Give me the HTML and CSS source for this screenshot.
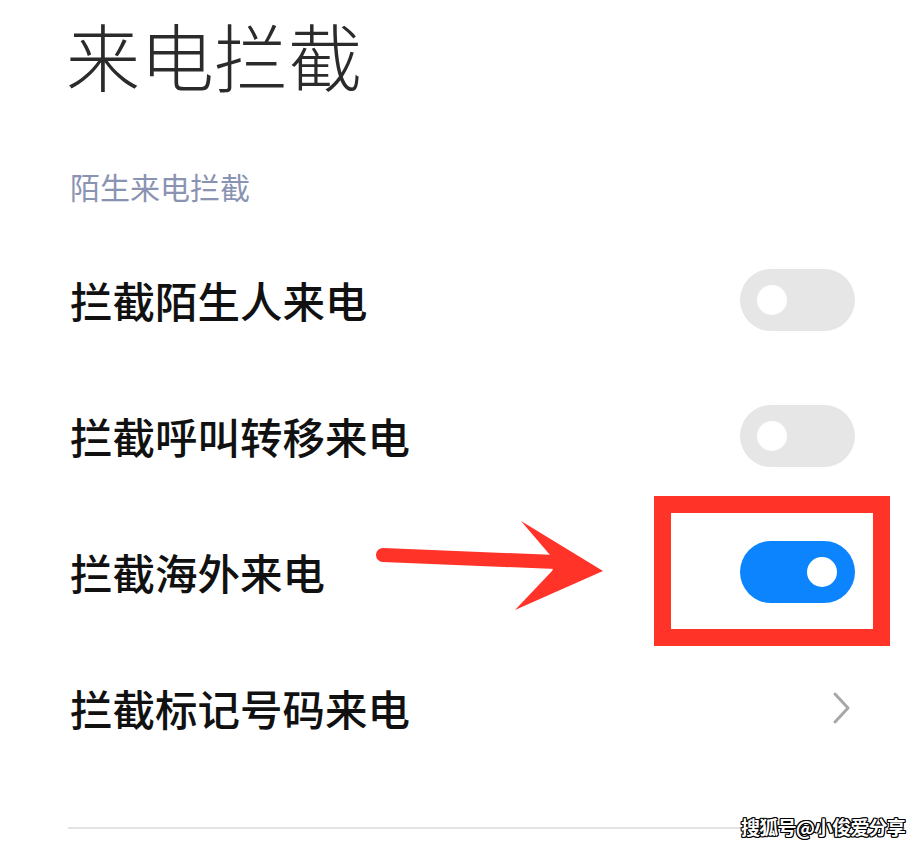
FILE: index.html
```html
<!DOCTYPE html>
<html lang="zh-CN">
<head>
<meta charset="utf-8">
<title>来电拦截</title>
<link rel="stylesheet" href="styles.css">
</head>
<body>
<div class="page">
  <h1 class="title">来电拦截</h1>
  <div class="section">陌生来电拦截</div>
  <ul class="list">
    <li class="row">
      <span class="label">拦截陌生人来电</span>
      <span class="switch"><span class="knob"></span></span>
    </li>
    <li class="row">
      <span class="label">拦截呼叫转移来电</span>
      <span class="switch"><span class="knob"></span></span>
    </li>
    <li class="row">
      <span class="label">拦截海外来电</span>
      <span class="switch on"><span class="knob"></span></span>
    </li>
    <li class="row">
      <span class="label">拦截标记号码来电</span>
      <svg class="chevron" width="20" height="34" viewBox="0 0 20 34"><path d="M3 3 L16 17 L3 31" fill="none" stroke="#a8a8a8" stroke-width="3" stroke-linecap="round" stroke-linejoin="round"/></svg>
    </li>
  </ul>
  <div class="divider"></div>

  <svg class="arrow" width="240" height="100" viewBox="0 0 240 100">
    <path d="M7 34 L180 41" stroke="#ff3328" stroke-width="14" stroke-linecap="round" fill="none"/>
    <polygon points="145,0 227,50 139,89 176,50 180,41" fill="#ff3328"/>
  </svg>
  <div class="highlight"></div>
  <div class="watermark">搜狐号@小俊爱分享</div>
</div>
</body>
</html>
```

FILE: styles.css
```css
html, body {
  margin: 0;
  padding: 0;
  background: #ffffff;
}
body {
  font-family: "Noto Sans CJK SC", "Noto Sans", sans-serif;
  color: #111111;
}
.page {
  position: relative;
  width: 923px;
  height: 847px;
  padding: 0 68px 0 70px;
  box-sizing: border-box;
  overflow: hidden;
}
.title {
  margin: 0 0 0 -4px;
  padding-top: 14px;
  font-size: 74px;
  line-height: 80px;
  font-weight: 300;
  color: #2b2b2b;
  letter-spacing: 0;
}
.section {
  margin-top: 72px;
  font-size: 30px;
  line-height: 40px;
  color: #8a93b2;
  font-weight: 400;
}
.list {
  list-style: none;
  margin: 26px 0 0 0;
  padding: 0;
}
.row {
  height: 136px;
  display: flex;
  align-items: center;
  justify-content: space-between;
}
.label {
  font-size: 42.5px;
  font-weight: 500;
  color: #111111;
  line-height: 1;
}
.switch {
  position: relative;
  width: 115px;
  height: 62px;
  border-radius: 31px;
  background: #e6e6e6;
  display: flex;
  align-items: center;
  padding: 0 17px;
  box-sizing: border-box;
}
.switch .knob {
  width: 30px;
  height: 30px;
  border-radius: 50%;
  background: #ffffff;
}
.switch.on {
  background: #0b84fe;
  justify-content: flex-end;
  padding: 0 18px;
}
.chevron {
  margin-right: 3px;
}
.divider {
  margin-top: 51px;
  margin-left: -2px;
  margin-right: -50px;
  height: 2px;
  background: #e3e3e3;
}
.arrow {
  position: absolute;
  left: 376px;
  top: 521px;
}
.highlight {
  position: absolute;
  left: 654px;
  top: 496px;
  width: 236px;
  height: 150px;
  box-sizing: border-box;
  border: 17px solid #ff3328;
}
.watermark {
  position: absolute;
  right: 18px;
  bottom: 8px;
  font-size: 19px;
  font-weight: 700;
  line-height: 24px;
  color: #ffffff;
  letter-spacing: -0.8px;
  text-shadow: 1px 0 0 #000, -1px 0 0 #000, 0 1px 0 #000, 0 -1px 0 #000, 1px 1px 0 #000, -1px -1px 0 #000, 1px -1px 0 #000, -1px 1px 0 #000;
}
```
